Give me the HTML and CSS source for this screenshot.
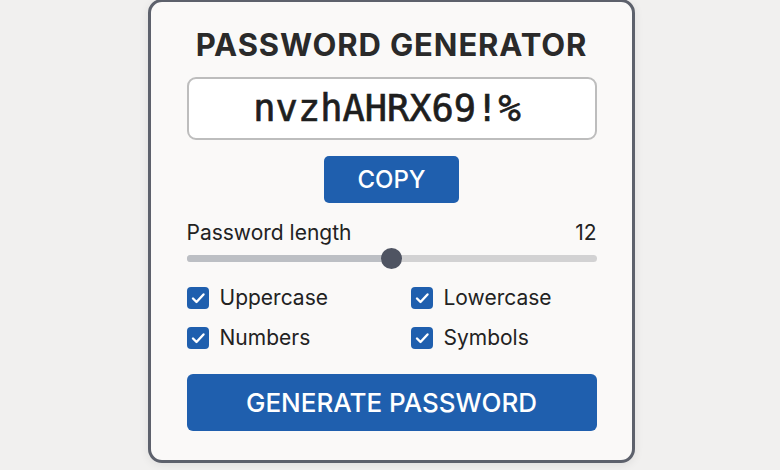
FILE: index.html
```html
<!DOCTYPE html>
<html lang="en">
<head>
<meta charset="utf-8">
<title>Password Generator</title>
<link rel="stylesheet" href="styles.css">
</head>
<body>
  <main class="card">
    <h1 class="title">PASSWORD GENERATOR</h1>
    <div class="output">nvzhAHRX69!%</div>
    <button class="btn btn-copy">COPY</button>

    <div class="length-row">
      <span>Password length</span>
      <span>12</span>
    </div>
    <div class="slider">
      <div class="slider-fill"></div>
      <div class="slider-thumb"></div>
    </div>

    <div class="options">
      <label class="option"><span class="check"><svg viewBox="0 0 22 22"><path d="M6 11.5l3.5 3.5L16.5 7.5"/></svg></span>Uppercase</label>
      <label class="option"><span class="check"><svg viewBox="0 0 22 22"><path d="M6 11.5l3.5 3.5L16.5 7.5"/></svg></span>Lowercase</label>
      <label class="option"><span class="check"><svg viewBox="0 0 22 22"><path d="M6 11.5l3.5 3.5L16.5 7.5"/></svg></span>Numbers</label>
      <label class="option"><span class="check"><svg viewBox="0 0 22 22"><path d="M6 11.5l3.5 3.5L16.5 7.5"/></svg></span>Symbols</label>
    </div>

    <button class="btn btn-generate">GENERATE PASSWORD</button>
  </main>
</body>
</html>
```

FILE: styles.css
```css
* { box-sizing: border-box; }

html, body {
  margin: 0;
  height: 100%;
}

body {
  background: #f1f0ef;
  font-family: Inter, "Noto Sans", sans-serif;
  color: #222;
  display: flex;
  justify-content: center;
  align-items: flex-start;
  overflow: hidden;
}

.card {
  width: 487px;
  height: 464px;
  margin-top: -1px;
  margin-left: 2px;
  background: #faf9f8;
  border: 3px solid #5d616c;
  border-radius: 14px;
  box-shadow: 0 2px 10px rgba(0, 0, 0, 0.08);
  padding: 0 35px 0 36px;
  display: flex;
  flex-direction: column;
}

.title {
  margin: 26px 0 0;
  font-size: 31px;
  font-weight: 700;
  line-height: 34px;
  text-align: center;
  color: #2a2a2a;
  letter-spacing: 0.9px;
}

.output {
  margin-top: 15px;
  height: 63px;
  padding-right: 9px;
  border: 2px solid #bdbdbd;
  border-radius: 9px;
  background: #fff;
  display: flex;
  align-items: center;
  justify-content: center;
  font-family: "DejaVu Sans Mono", monospace;
  font-size: 37px;
  font-weight: 400;
  -webkit-text-stroke: 0.7px #1e1e1e;
  color: #1e1e1e;
}

.btn {
  border: 0;
  background: #1f5fae;
  color: #fff;
  font-family: Inter, "Noto Sans", sans-serif;
  font-weight: 500;
  cursor: pointer;
}

.btn-copy {
  align-self: center;
  margin-top: 16px;
  width: 135px;
  height: 47px;
  border-radius: 5px;
  font-size: 24px;
}

.length-row {
  margin-top: 16px;
  display: flex;
  justify-content: space-between;
  font-size: 21px;
  line-height: 28px;
}

.slider {
  position: relative;
  margin-top: 8px;
  height: 7px;
  border-radius: 4px;
  background: #d2d2d3;
}

.slider-fill {
  width: 50%;
  height: 100%;
  border-radius: 4px;
  background: #bcbfc4;
}

.slider-thumb {
  position: absolute;
  left: 50%;
  top: 50%;
  width: 21px;
  height: 21px;
  margin: -10.5px 0 0 -10.5px;
  border-radius: 50%;
  background: #4f5462;
}

.options {
  margin-top: 25px;
  display: grid;
  grid-template-columns: 224px 1fr;
  row-gap: 18px;
}

.option {
  display: flex;
  align-items: center;
  gap: 11px;
  font-size: 21px;
  line-height: 22px;
  color: #222;
}

.check {
  width: 22px;
  height: 22px;
  border-radius: 4px;
  background: #1f5fae;
  display: flex;
}

.check svg {
  width: 22px;
  height: 22px;
  fill: none;
  stroke: #fff;
  stroke-width: 2.4;
  stroke-linecap: round;
  stroke-linejoin: round;
}

.btn-generate {
  margin-top: 25px;
  height: 57px;
  border-radius: 6px;
  font-size: 26px;
}
```
